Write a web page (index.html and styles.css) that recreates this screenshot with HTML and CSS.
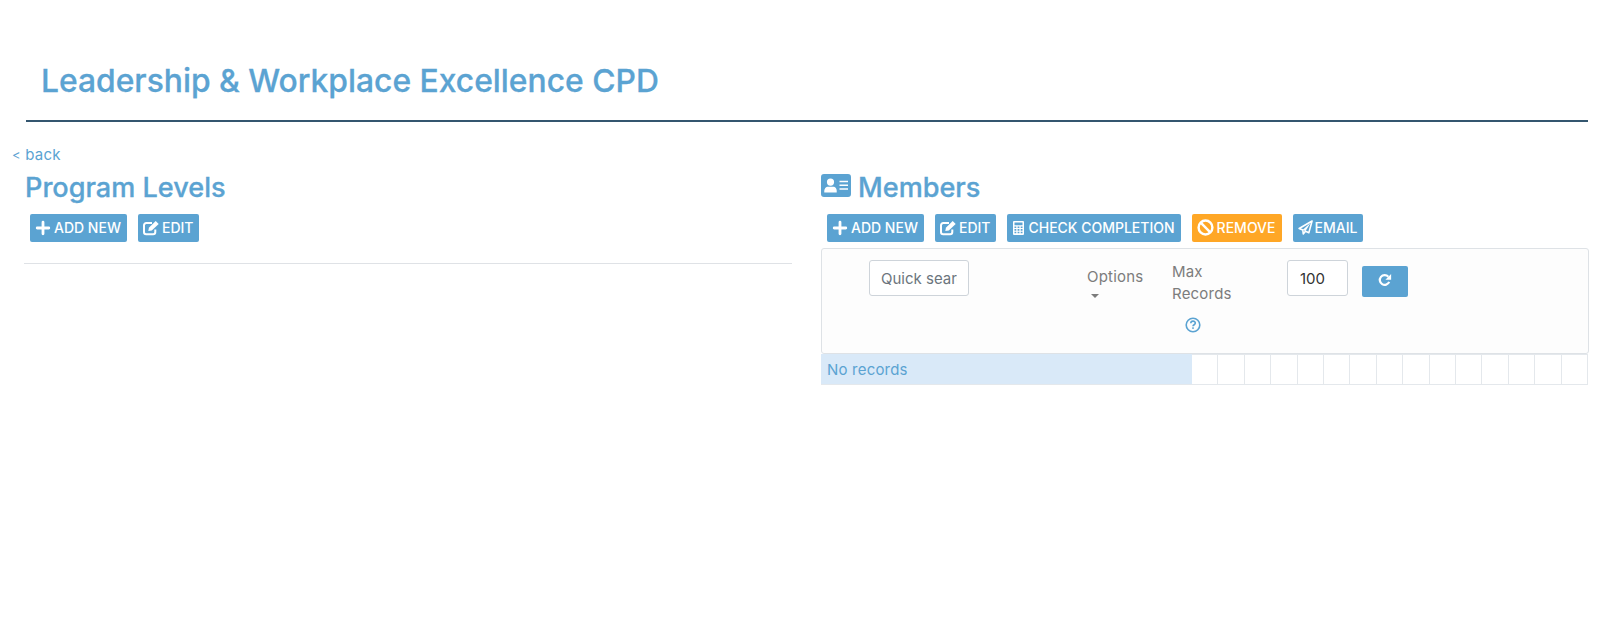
FILE: index.html
```html
<!DOCTYPE html>
<html lang="en">
<head>
<meta charset="utf-8">
<title>Leadership &amp; Workplace Excellence CPD</title>
<link rel="stylesheet" href="styles.css">
</head>
<body>
<svg class="defs" width="0" height="0" aria-hidden="true">
  <symbol id="i-plus" viewBox="0 0 16 16"><path d="M8 2.200v11.600M2.200 8h11.600" fill="none" stroke="currentColor" stroke-width="2.800" stroke-linecap="round"/></symbol>
  <symbol id="i-edit" viewBox="0 0 16 16"><path d="M12.300 9.500v2.500a2.200 2.200 0 0 1-2.200 2.200H3.200A2.200 2.200 0 0 1 1 12V5.300a2.200 2.200 0 0 1 2.200-2.200H9" fill="none" stroke="currentColor" stroke-width="2"/><path d="M5.300 11l.6-3.300L12.700 1l3 2.900-6.900 6.700z" fill="currentColor"/></symbol>
  <symbol id="i-calc" viewBox="0 0 11 14"><path fill-rule="evenodd" d="M1 0h9a1 1 0 0 1 1 1v12a1 1 0 0 1-1 1H1a1 1 0 0 1-1-1V1a1 1 0 0 1 1-1zM1.500 1.500v2.800h8V1.500zM1.500 5.500v1.600h1.800V5.500zm3.100 0v1.600h1.800V5.500zm3.100 0v1.600h1.800V5.500zM1.500 8.100v1.600h1.800V8.100zm3.100 0v1.600h1.800V8.100zm3.100 0v1.600h1.800V8.100zM1.500 10.700v1.600h1.800v-1.600zm3.100 0v1.600h1.800v-1.600zm3.100 0v1.600h1.800v-1.600z" fill="currentColor"/></symbol>
  <symbol id="i-ban" viewBox="0 0 16 16"><circle cx="8" cy="8" r="6.500" fill="none" stroke="currentColor" stroke-width="2.300"/><path d="M3.500 3.500l9 9" stroke="currentColor" stroke-width="2.300"/></symbol>
  <symbol id="i-plane" viewBox="0 0 16 16"><path d="M15 1L1.200 9l3.900 1.600.5 4.200 2.400-2.900 3.600 1.600z" fill="none" stroke="currentColor" stroke-width="1.700" stroke-linejoin="round"/><path d="M5.200 10.500L13.500 3 7.900 12" fill="currentColor"/></symbol>
  <symbol id="i-refresh" viewBox="0 0 16 16"><path d="M12.800 10.200A5.600 5.600 0 1 1 11.800 4.200" fill="none" stroke="currentColor" stroke-width="2.500"/><path d="M15 1v6.600H8.400z" fill="currentColor"/></symbol>
  <symbol id="i-card" viewBox="0 0 30 23"><path fill-rule="evenodd" d="M3 0h24a3 3 0 0 1 3 3v17a3 3 0 0 1-3 3H3a3 3 0 0 1-3-3V3a3 3 0 0 1 3-3zm6.500 4.500a3.600 3.600 0 1 0 0 7.200 3.600 3.600 0 0 0 0-7.200zM3.300 18.500h12.400c.5-4-1.500-5.700-3.500-5.700H7c-2 0-4 1.700-3.700 5.700zM18.500 6.800v1.500H27V6.800zm0 3.700v1.500H27v-1.500zm0 3.700v1.500H27v-1.500z" fill="currentColor"/></symbol>
  <symbol id="i-help" viewBox="0 0 16 16"><circle cx="8" cy="8" r="6.800" fill="none" stroke="currentColor" stroke-width="1.600"/><path d="M5.800 6.300c0-2.900 4.500-2.900 4.500-.2 0 1.600-2.300 1.700-2.300 3.200" fill="none" stroke="currentColor" stroke-width="1.600"/><rect x="7.200" y="10.300" width="1.600" height="1.600" fill="currentColor"/></symbol>
</svg>

<header class="page-header">
  <h1 class="page-title">Leadership &amp; Workplace Excellence CPD</h1>
</header>

<a class="back-link" href="#"><span class="back-mark">&lt;</span> back</a>

<main class="columns">
  <section class="col col-left">
    <h2 class="section-title">Program Levels</h2>
    <div class="toolbar">
      <button class="btn"><svg class="icon"><use href="#i-plus"/></svg>ADD NEW</button>
      <button class="btn"><svg class="icon"><use href="#i-edit"/></svg>EDIT</button>
    </div>
    <hr class="divider">
  </section>

  <section class="col col-right">
    <h2 class="section-title"><svg class="card-icon"><use href="#i-card"/></svg>Members</h2>
    <div class="toolbar">
      <button class="btn"><svg class="icon"><use href="#i-plus"/></svg>ADD NEW</button>
      <button class="btn"><svg class="icon"><use href="#i-edit"/></svg>EDIT</button>
      <button class="btn"><svg class="icon-calc"><use href="#i-calc"/></svg>CHECK COMPLETION</button>
      <button class="btn btn-warn"><svg class="icon icon-ban"><use href="#i-ban"/></svg>REMOVE</button>
      <button class="btn"><svg class="icon icon-plane"><use href="#i-plane"/></svg>EMAIL</button>
    </div>

    <div class="panel">
      <input class="field field-search" type="text" placeholder="Quick search">
      <div class="options">
        <span>Options</span>
        <span class="caret"></span>
      </div>
      <div class="max-records">
        <span>Max Records</span>
        <svg class="help"><use href="#i-help"/></svg>
      </div>
      <input class="field field-max" type="text" value="100">
      <button class="btn-refresh"><svg class="icon-refresh"><use href="#i-refresh"/></svg></button>
    </div>

    <div class="records">
      <div class="no-records">No records</div>
      <div class="cell"></div><div class="cell"></div><div class="cell"></div>
      <div class="cell"></div><div class="cell"></div><div class="cell"></div>
      <div class="cell"></div><div class="cell"></div><div class="cell"></div>
      <div class="cell"></div><div class="cell"></div><div class="cell"></div>
      <div class="cell"></div><div class="cell"></div><div class="cell"></div>
    </div>
  </section>
</main>
</body>
</html>
```

FILE: styles.css
```css
* { box-sizing: border-box; }

html, body { height: 100%; }

body {
  margin: 0;
  background: #fff;
  color: #7c7c7c;
  font-family: "Inter", "Open Sans", "Liberation Sans", sans-serif;
  font-size: 15px;
  letter-spacing: .2px;
  overflow: hidden;
}

.defs { position: absolute; }

.page-header {
  margin: 0 9px 0 26px;
  padding: 58px 15px 16px;
  border-bottom: 2px solid #34566f;
}

.page-title {
  margin: 0;
  font-size: 31.800px;
  line-height: 46px;
  font-weight: 500;
  letter-spacing: 0;
  color: #5ba3d2;
  -webkit-text-stroke: .3px #5ba3d2;
}

.back-link {
  display: block;
  margin-top: 22px;
  padding-left: 12px;
  line-height: 22px;
  font-size: 15px;
  color: #5ba3d2;
  text-decoration: none;
}

.back-mark {
  font-size: 13px;
}

.columns {
  display: flex;
  margin-top: 3px;
  padding: 0 8px 0 24px;
  gap: 29px;
}

.col-left { width: 768px; }
.col-right { flex: 1; }

.section-title {
  display: flex;
  align-items: center;
  gap: 7px;
  margin: 0 0 0 1px;
  height: 36px;
  font-size: 27.100px;
  font-weight: 500;
  letter-spacing: 0;
  color: #5ba3d2;
  -webkit-text-stroke: .3px #5ba3d2;
}

.col-right .section-title { margin-left: 0; }

.card-icon {
  width: 30px;
  height: 23px;
  margin-top: -3px;
}

.toolbar {
  display: flex;
  gap: 11px;
  margin-top: 9px;
  padding-left: 6px;
}

.btn {
  display: inline-flex;
  align-items: center;
  gap: 3px;
  height: 28px;
  padding: 0 6px 1px 5px;
  border: 0;
  border-radius: 2px;
  background: #5ba3d2;
  color: #fff;
  font: 500 14px "Inter", "Open Sans", sans-serif;
}

.btn-warn { background: #ffa726; }

.icon {
  width: 16px;
  height: 16px;
}

.icon-calc {
  width: 11px;
  height: 14px;
  margin: 0 1px 0 1px;
}

.icon-ban {
  width: 17px;
  height: 17px;
}

.icon-plane {
  width: 15px;
  height: 15px;
  margin-right: -1px;
}

.divider {
  margin: 21px 0 0;
  border: 0;
  border-top: 1px solid #dfe2e6;
}

.panel {
  display: flex;
  align-items: flex-start;
  height: 106px;
  margin-top: 6px;
  padding: 11px 0 0 47px;
  border: 1px solid #dee2e6;
  border-radius: 3px;
  background: #fdfdfd;
}

.field {
  height: 36px;
  border: 1px solid #ced4da;
  border-radius: 3px;
  background: #fff;
  font: 15px "Inter", "Open Sans", sans-serif;
  color: #333;
  outline: 0;
}

.field::placeholder { color: #6c757d; opacity: 1; }

.field-search {
  width: 100px;
  padding: 0 11px;
}

.field-max {
  width: 61px;
  padding: 0 12px;
}

.options {
  width: 85px;
  margin-left: 118px;
  padding-top: 6px;
  line-height: 22px;
}

.options span:first-child { display: block; }

.caret {
  display: block;
  width: 0;
  margin: 6px 0 0 4px;
  border-style: solid;
  border-width: 4px 4px 0;
  border-color: #7c7c7c transparent transparent;
}

.max-records {
  width: 115px;
  padding-top: 1px;
  line-height: 22px;
}

.max-records span {
  display: block;
  width: 70px;
}

.help {
  display: block;
  width: 16px;
  height: 16px;
  margin: 12px 0 0 13px;
  color: #5ba3d2;
}

.btn-refresh {
  display: flex;
  align-items: center;
  justify-content: center;
  width: 46px;
  height: 31px;
  margin: 6px 0 0 14px;
  padding: 0 0 3px;
  border: 0;
  border-radius: 2px;
  background: #5ba3d2;
  color: #fff;
}

.icon-refresh {
  width: 14px;
  height: 14px;
}

.records {
  display: flex;
  height: 31px;
  margin-right: 1px;
  border-top: 1px solid #e4e8ec;
  border-bottom: 1px solid #e4e8ec;
}

.no-records {
  width: 371px;
  margin-top: -1px;
  padding-left: 6px;
  background: #d9e9f8;
  color: #5ba3d2;
  line-height: 31px;
}

.cell {
  flex: 1;
  border-right: 1px solid #e4e8ec;
}
```
